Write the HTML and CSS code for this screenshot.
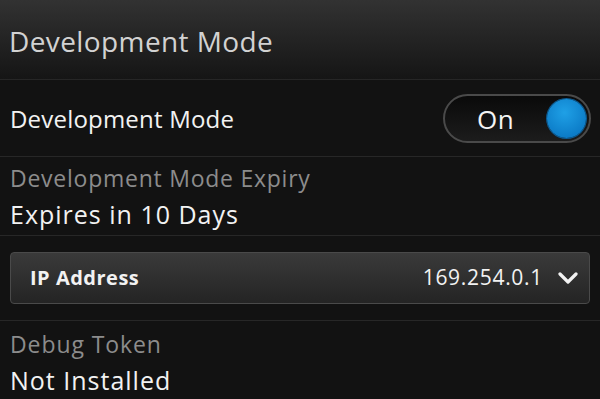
FILE: index.html
```html
<!DOCTYPE html>
<html>
<head>
<meta charset="utf-8">
<link rel="stylesheet" href="styles.css">
</head>
<body>
<div class="screen">
  <header class="title-bar">
    <h1 class="title">Development Mode</h1>
  </header>
  <div class="row toggle-row">
    <span class="row-label">Development Mode</span>
    <div class="toggle">
      <span class="toggle-text">On</span>
      <span class="knob"></span>
    </div>
  </div>
  <div class="row info-row">
    <div class="info-label">Development Mode Expiry</div>
    <div class="info-value">Expires in 10 Days</div>
  </div>
  <div class="row dropdown-row">
    <div class="dropdown">
      <span class="dd-label">IP Address</span>
      <span class="dd-value">169.254.0.1
        <svg class="chevron" width="20" height="12" viewBox="0 0 20 12"><path d="M2 2 L10 10 L18 2" fill="none" stroke="#f2f2f2" stroke-width="3.2" stroke-linecap="round" stroke-linejoin="round"/></svg>
      </span>
    </div>
  </div>
  <div class="row info-row last">
    <div class="info-label short">Debug Token</div>
    <div class="info-value">Not Installed</div>
  </div>
</div>
</body>
</html>
```
FILE: styles.css
```css
html, body {
  margin: 0;
  padding: 0;
  background: #121212;
}
body {
  font-family: "Open Sans", "Noto Sans", sans-serif;
  color: #f0f0f0;
}
.screen {
  width: 600px;
  height: 399px;
  overflow: hidden;
  display: flex;
  flex-direction: column;
}
.title-bar {
  height: 80px;
  flex-shrink: 0;
  box-sizing: border-box;
  background: linear-gradient(#323232, #151515);
  border-bottom: 1px solid #262626;
  display: flex;
  align-items: center;
  padding-left: 9px;
}
.title {
  margin: 3px 0 0 0;
  font-weight: 400;
  font-size: 28px;
  letter-spacing: 0.4px;
  color: #d2d2d2;
}
.row {
  flex-shrink: 0;
  border-bottom: 1px solid #272727;
  box-sizing: border-box;
  padding: 0 10px;
}
.toggle-row {
  height: 77px;
  display: flex;
  align-items: center;
  justify-content: space-between;
}
.row-label {
  font-size: 24px;
  letter-spacing: 0.2px;
  color: #f2f2f2;
}
.toggle {
  width: 148px;
  height: 49px;
  box-sizing: border-box;
  border: 2px solid #4a4a4a;
  border-radius: 25px;
  background: linear-gradient(#0a0a0a, #1c1c1c);
  display: flex;
  align-items: center;
  justify-content: space-between;
  padding: 0 3px 0 32px;
  margin-right: -1px;
  margin-top: 1px;
}
.toggle-text {
  font-size: 26px;
  letter-spacing: 0.5px;
  color: #f4f4f4;
}
.knob {
  width: 39px;
  height: 39px;
  border-radius: 50%;
  background: radial-gradient(circle at 45% 35%, #1fa0e6, #0a78c4 80%);
  box-shadow: 0 0 0 1px #0b5b94;
}
.info-row {
  height: 79px;
  padding-top: 6px;
}
.info-label {
  font-size: 23px;
  letter-spacing: 0.75px;
  color: #8c8c8c;
  line-height: 30px;
}
.info-label.short {
  letter-spacing: 0.9px;
}
.info-value {
  font-size: 25px;
  letter-spacing: 1px;
  color: #f2f2f2;
  line-height: 42px;
}
.dropdown-row {
  height: 85px;
  padding-top: 16px;
}
.dropdown {
  height: 52px;
  box-sizing: border-box;
  border: 1px solid #4a4a4a;
  border-radius: 4px;
  background: linear-gradient(#3a3a3a, #242424);
  display: flex;
  align-items: center;
  justify-content: space-between;
  padding: 0 11px 2px 19px;
}
.dd-label {
  font-weight: 700;
  font-size: 20px;
  letter-spacing: 0.5px;
  color: #f2f2f2;
}
.dd-value {
  font-size: 21px;
  letter-spacing: 0.7px;
  color: #f2f2f2;
  display: flex;
  align-items: center;
  gap: 15px;
}
.chevron {
  display: block;
  margin-top: 2px;
}
.last {
  border-bottom: none;
  padding-top: 8px;
}
```
